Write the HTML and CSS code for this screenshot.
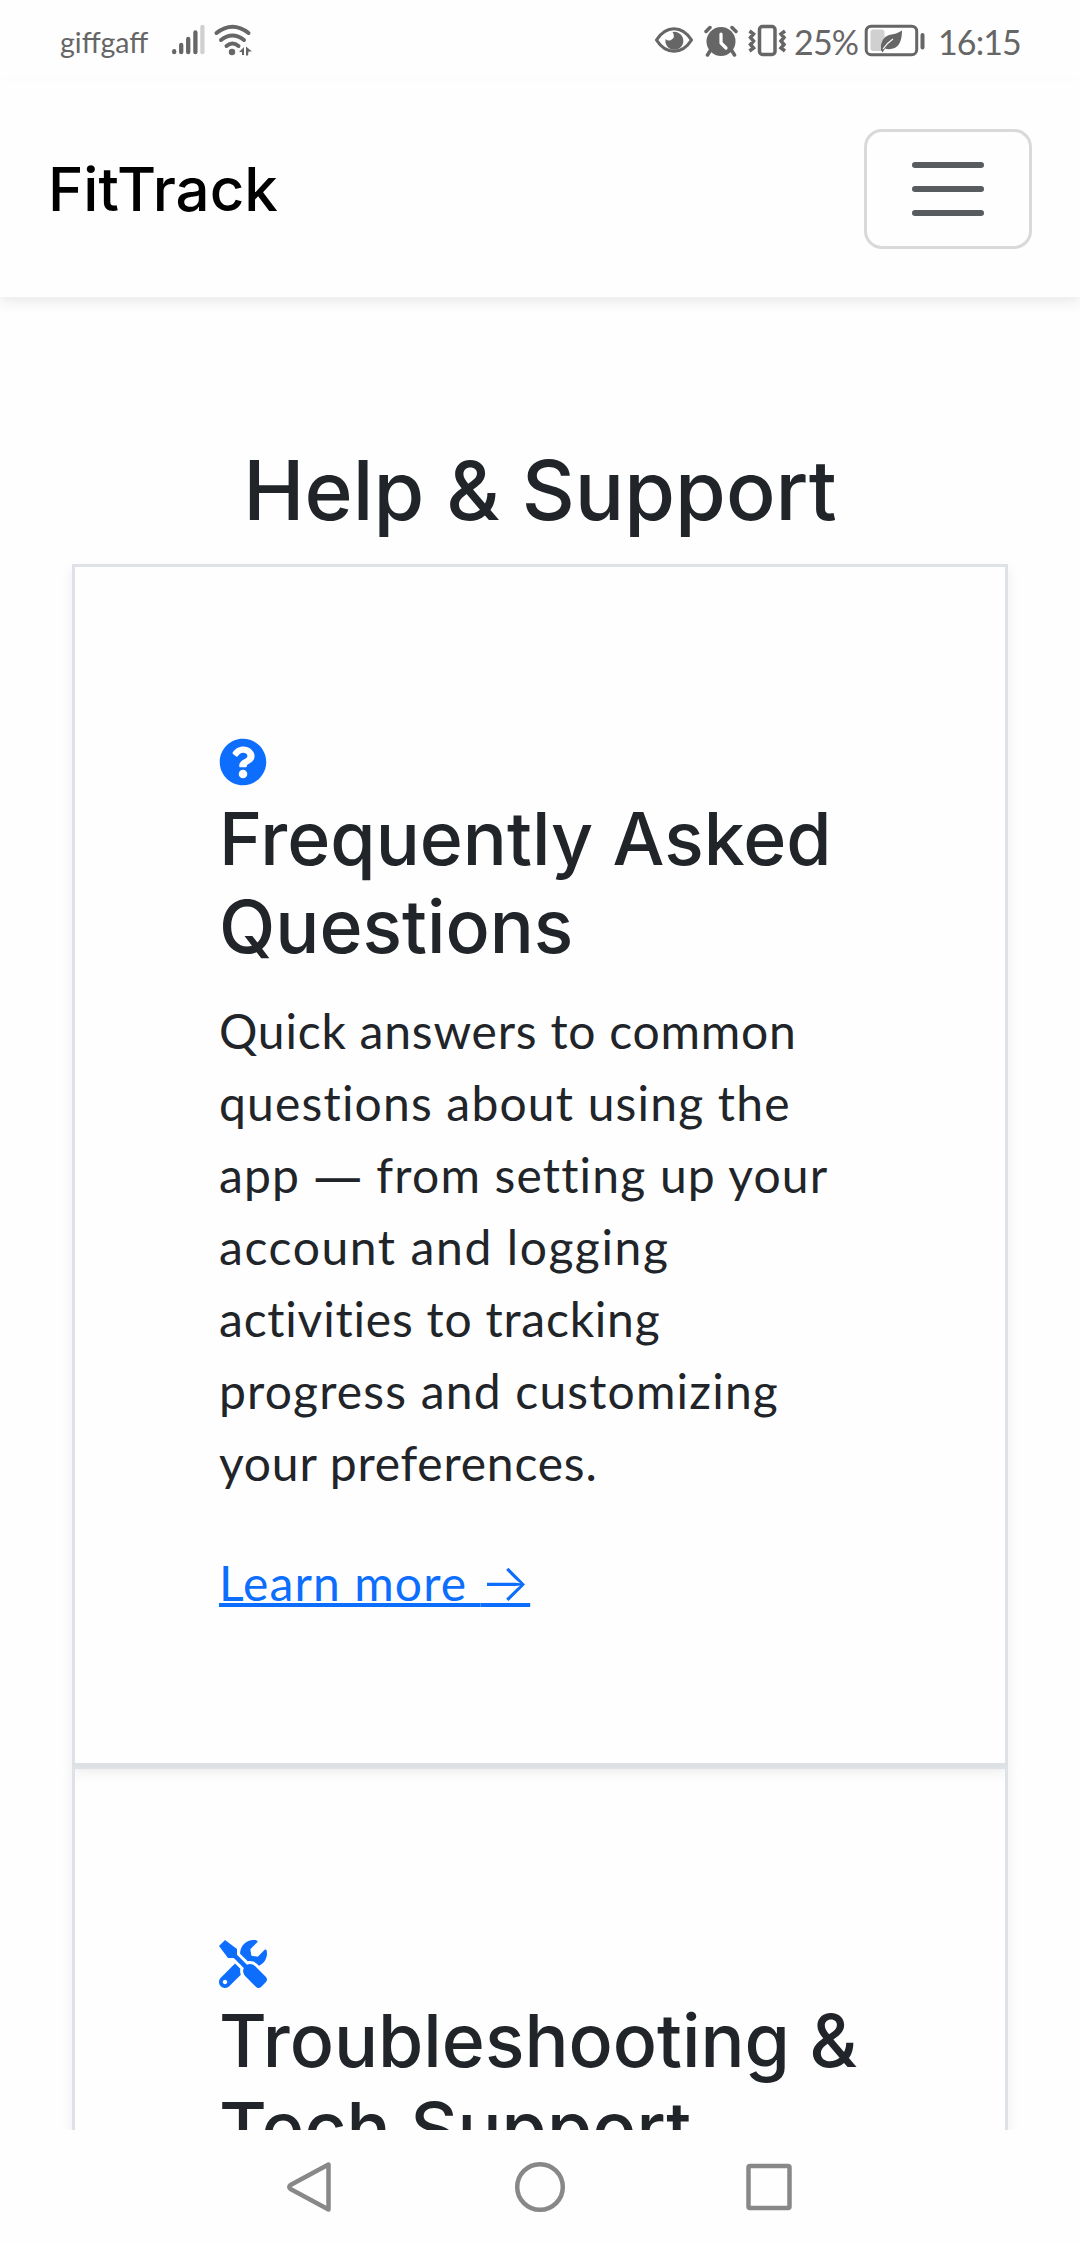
FILE: index.html
```html
<!DOCTYPE html>
<html lang="en">
<head>
<meta charset="utf-8">
<title>FitTrack - Help &amp; Support</title>
<link rel="stylesheet" href="styles.css">
</head>
<body>
<div class="screen">
  <div class="status-bar">
    <span class="carrier">giffgaff</span>
    <svg class="signal" viewBox="0 0 80 34" width="80" height="34">
      <g stroke="#666" stroke-width="4.3" stroke-linecap="round">
        <path d="M4.2 28.2v1M11.2 22v7.2M18.2 16v13.2M25.4 9.4v19.8"/>
        <path d="M32.4 4v25.2" stroke="#d0d0d0"/>
      </g>
      <g fill="none" stroke="#666" stroke-width="4" stroke-linecap="round">
        <path d="M46.500 10Q62.500 -2.500 78.500 10"/>
        <path d="M51 17Q62.500 8 74 17M56.500 23Q62.500 18 68.500 23"/>
      </g>
      <circle cx="62" cy="29" r="3.200" fill="#666"/>
      <path d="M69 29l5-5v8h-2v-3zM76 23.500l6 5h-3.500l-.5 4h-2z" fill="#666"/>
    </svg>
    <div class="indicators">
      <svg class="eye" viewBox="0 0 40 34" width="40" height="34">
        <path d="M2.500 17C12 2 28 2 37.500 17C28 32 12 32 2.500 17Z" fill="none" stroke="#666" stroke-width="3.200" stroke-linejoin="round"/>
        <path d="M18.500 9A9 9 0 1 1 11.500 16Q14 18.500 17 17Q22 14 18.500 9Z" fill="#666"/>
      </svg>
      <svg class="alarm" viewBox="0 0 36 34" width="36" height="34">
        <circle cx="18" cy="18.500" r="14.500" fill="#666"/>
        <path d="M3 8.500l4-4M33 8.500l-4-4M7 28l-2.500 4M29 28l2.500 4" stroke="#666" stroke-width="3.500" stroke-linecap="round"/>
        <path d="M18 11v9l5 5" fill="none" stroke="#fff" stroke-width="3.200" stroke-linecap="round" stroke-linejoin="round"/>
      </svg>
      <svg class="vibrate" viewBox="0 0 40 34" width="40" height="34" fill="none" stroke="#666" stroke-width="3.500">
        <rect x="12.500" y="3.500" width="15.500" height="28" rx="3"/>
        <path d="M2.500 8l4 3-3 3.500 3 3.500-3 3.500 3 3.500-4 3M38 8l-4 3 3 3.500-3 3.500 3 3.500-3 3.500 4 3"/>
      </svg>
      <span class="percent">25%</span>
      <svg class="battery" viewBox="0 0 62 34" width="62" height="34">
        <rect x="6.500" y="6.500" width="14" height="21.500" rx="3" fill="#d0d0d0"/>
        <rect x="2.200" y="3.200" width="50.500" height="28.500" rx="5" fill="none" stroke="#666" stroke-width="3"/>
        <path d="M17 27Q16 15 25 12Q33 11 38 7.500Q38 23 29 25.500Q24 27 21 25.500L18.500 29.500L17 27Z" fill="#666"/>
        <path d="M19 26Q23 20 29 16" fill="none" stroke="#fff" stroke-width="1.200"/>
        <rect x="56.500" y="10" width="4" height="16.500" rx="2" fill="#666"/>
      </svg>
      <span class="clock">16:15</span>
    </div>
  </div>

  <header class="navbar">
    <span class="brand">FitTrack</span>
    <button class="toggler" aria-label="Toggle navigation">
      <span class="bar"></span><span class="bar"></span><span class="bar"></span>
    </button>
  </header>

  <main class="content">
    <h1 class="page-title">Help &amp; Support</h1>
    <section class="card">
      <svg class="icon" viewBox="0 0 512 512"><path d="M504 256c0 136.997-111.043 248-248 248S8 392.997 8 256C8 119.083 119.043 8 256 8s248 111.083 248 248zM262.655 90c-54.497 0-89.255 22.957-116.549 63.758-3.536 5.286-2.353 12.415 2.715 16.258l34.699 26.31c5.205 3.947 12.621 3.008 16.665-2.122 17.864-22.658 30.113-35.797 57.303-35.797 20.429 0 45.698 13.148 45.698 32.958 0 14.976-12.363 22.667-32.534 33.976C247.128 238.528 216 254.941 216 296v4c0 6.627 5.373 12 12 12h56c6.627 0 12-5.373 12-12v-1.333c0-28.462 83.186-29.647 83.186-106.667 0-58.002-60.165-102-116.531-102zM256 338c-25.365 0-46 20.635-46 46 0 25.364 20.635 46 46 46s46-20.636 46-46c0-25.364-20.635-46-46-46z"/></svg>
      <h2 class="card-title">Frequently Asked<br>Questions</h2>
      <p class="card-text"><span class="snug">Quick answers to common</span><br>questions about using the<br>app <span class="dash">—</span> from setting up your<br><span class="loose">account and logging</span><br><span class="snug">activities to tracking</span><br>progress and customizing<br><span class="snug">your preferences.</span></p>
      <a class="card-link" href="#">Learn more <span class="arrow">→</span></a>
    </section>
    <section class="card">
      <svg class="icon" viewBox="0 0 512 512"><path d="M501.1 395.7L384 278.6c-23.1-23.1-57.6-27.6-85.4-13.9L192 158.1V96L64 0 0 64l96 128h62.1l106.6 106.6c-13.6 27.8-9.2 62.3 13.9 85.4l117.1 117.1c14.6 14.6 38.2 14.6 52.7 0l52.7-52.7c14.5-14.6 14.5-38.2 0-52.7zM331.7 225c28.3 0 54.9 11 74.9 31l19.4 19.4c15.8-6.9 30.8-16.5 43.8-29.5 37.1-37.1 49.7-89.3 37.9-136.7-2.2-9-13.5-12.1-20.1-5.5l-74.4 74.4-67.9-11.3L334 98.9l74.4-74.4c6.6-6.6 3.4-17.9-5.7-20.2-47.4-11.7-99.6.9-136.6 37.9-28.500 28.500-41.9 66.1-41.2 103.6l82.1 82.1c8.1-1.9 16.5-2.9 24.7-2.9zm-103.9 82l-56.7-56.7L18.7 402.8c-25 25-25 65.5 0 90.5s65.5 25 90.5 0l123.6-123.6c-7.6-19.9-9.9-41.6-5-62.7zM64 472c-13.2 0-24-10.8-24-24 0-13.3 10.7-24 24-24s24 10.7 24 24c0 13.2-10.7 24-24 24z"/></svg>
      <h2 class="card-title">Troubleshooting &amp;<br>Tech Support</h2>
    </section>
  </main>

  <nav class="system-nav">
    <svg viewBox="0 0 52 52" width="52" height="52"><path d="M43.500 3.500V48.500L5.500 28Q3 26 5.500 24Z"/></svg>
    <svg viewBox="0 0 52 52" width="52" height="52"><circle cx="26" cy="26" r="22.800"/></svg>
    <svg viewBox="0 0 52 52" width="52" height="52"><rect x="5.500" y="5" width="41" height="42" rx="1.500"/></svg>
  </nav>
</div>
</body>
</html>
```
FILE: styles.css
```css
* { box-sizing: border-box; }

body {
  margin: 0;
  background: #fefefe;
  color: #212529;
  font-family: Lato, "Noto Sans", sans-serif;
}

.screen {
  display: flex;
  flex-direction: column;
  width: 1080px;
  height: 2244px;
  overflow: hidden;
}

.status-bar {
  display: flex;
  align-items: flex-start;
  flex: none;
  height: 81px;
  padding: 23px 60px 0;
  color: #666;
}

.carrier {
  width: 110px;
  padding-top: 1px;
  font-size: 28.5px;
  line-height: 36px;
  white-space: nowrap;
}

.signal { overflow: visible; }

.indicators {
  display: flex;
  margin-left: auto;
  font-size: 34px;
  line-height: 37px;
  white-space: nowrap;
}

.alarm { margin-left: 9px; }
.vibrate { margin-left: 8px; }
.percent { width: 70px; margin-left: 7px; letter-spacing: -0.8px; }
.clock { width: 82px; margin-left: 12px; letter-spacing: -0.9px; }

.navbar {
  display: flex;
  justify-content: space-between;
  align-items: center;
  flex: none;
  height: 216px;
  padding: 0 48px;
  position: relative;
  z-index: 2;
  background: #fefefe;
  box-shadow: 0 6px 12px rgba(0, 0, 0, .075);
}

.brand {
  color: #000;
  font: 500 60px/90px Inter, sans-serif;
}

.toggler {
  display: flex;
  flex-direction: column;
  align-items: center;
  justify-content: center;
  gap: 18px;
  width: 168px;
  height: 120px;
  padding: 0;
  background: transparent;
  border: 3px solid #d9d9d9;
  border-radius: 18px;
}

.bar {
  width: 72px;
  height: 6px;
  border-radius: 3px;
  background: #585c5f;
}

.content {
  flex: 1;
  min-height: 0;
  overflow: hidden;
  padding: 144px 72px 0;
}

.page-title {
  margin: 0 0 24px;
  font: 500 82.2px/99px Inter, sans-serif;
  text-align: center;
}

.card {
  height: 1202px;
  padding: 144px;
  border: 3px solid #dee2e6;
  box-shadow: 0 6px 12px rgba(0, 0, 0, .075);
}

.icon {
  display: block;
  width: 48px;
  height: 48px;
  margin: 27px 0 9px;
  fill: #0d6efd;
}

.card-title {
  margin: 0 0 24px;
  font: 500 73.32px/88px Inter, sans-serif;
  white-space: nowrap;
}

.card-text {
  margin: 0 0 48px;
  font-size: 48px;
  line-height: 72px;
  letter-spacing: 1.18px;
  white-space: nowrap;
}

.snug { letter-spacing: .78px; }
.loose { letter-spacing: 1.6px; }

.dash {
  font-family: "Noto Sans", sans-serif;
  line-height: 1;
}

.card-link {
  display: block;
  width: max-content;
  color: #0d6efd;
  font-size: 48px;
  line-height: 72px;
  letter-spacing: 1.1px;
  text-decoration-thickness: 4px;
}

.arrow {
  font: 300 52px/1 Inter, sans-serif;
  letter-spacing: 0;
}

.system-nav {
  display: flex;
  justify-content: center;
  align-items: center;
  gap: 177px;
  flex: none;
  height: 114px;
  background: #fefefe;
}

.system-nav svg {
  fill: none;
  stroke: #888;
  stroke-width: 4.5;
  stroke-linejoin: round;
}
```
